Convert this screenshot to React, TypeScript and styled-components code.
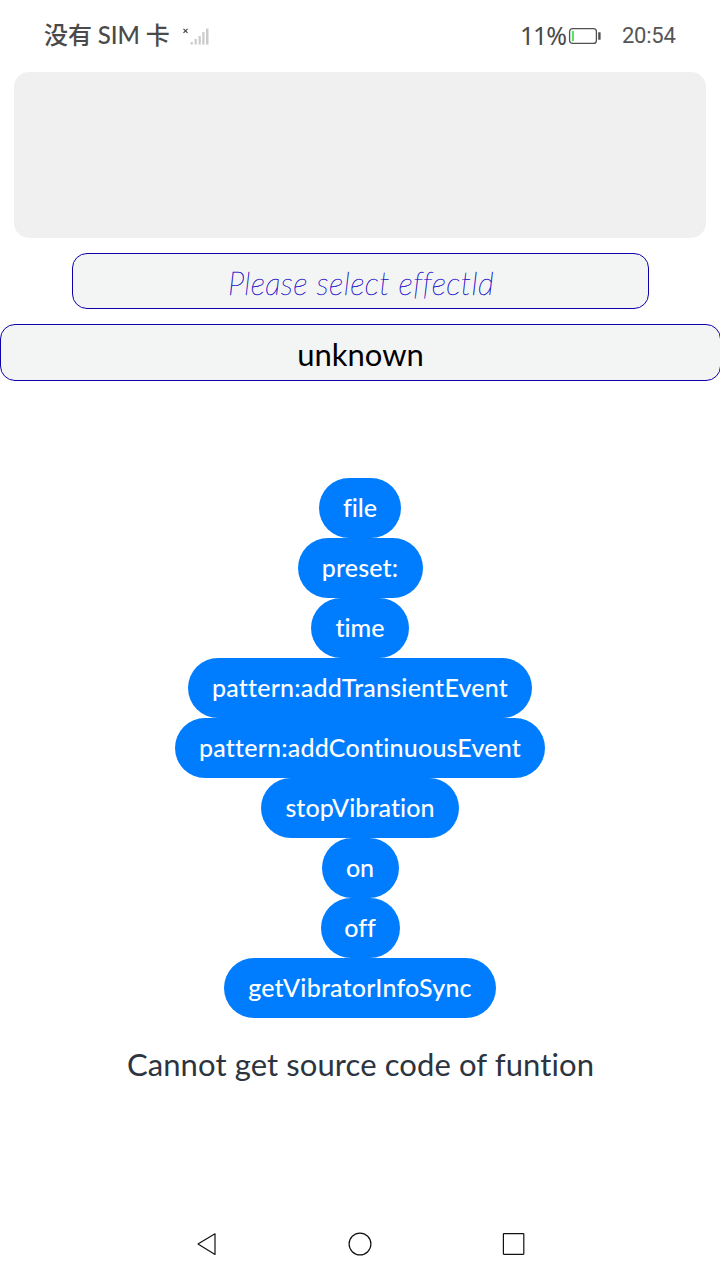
import React from "react";
import styled, { createGlobalStyle } from "styled-components";

const GlobalStyle = createGlobalStyle`
  * { box-sizing: border-box; }
  body { margin: 0; background: #fff; }
`;

const Screen = styled.div`
  display: flex;
  flex-direction: column;
  align-items: center;
  width: 720px;
  height: 1280px;
  overflow: hidden;
  background: #fff;
  font-family: Lato, "Noto Sans CJK SC", sans-serif;
  font-variant-ligatures: none;
`;

const StatusBar = styled.header`
  display: flex;
  align-items: center;
  justify-content: space-between;
  width: 100%;
  height: 72px;
  padding: 0 44px;
  color: #4a4a4a;
`;

const StatusGroup = styled.div`
  display: flex;
  align-items: center;
`;

const Carrier = styled.span`
  width: 138px;
  padding-bottom: 2px;
  font-size: 24px;
  font-weight: 500;
  line-height: 30px;
  letter-spacing: -0.1px;
  white-space: nowrap;
`;

const Battery = styled.span`
  margin-right: 2px;
  padding-bottom: 2px;
  font: 400 25px/30px "Noto Sans", sans-serif;
  letter-spacing: -1.1px;
`;

const Clock = styled.span`
  width: 54px;
  margin-left: 20px;
  font: 400 22px/30px Roboto, sans-serif;
  letter-spacing: -0.25px;
  color: #555;
`;

const OutputPanel = styled.section`
  flex: none;
  width: 692px;
  height: 166px;
  border-radius: 15px;
  background: #f0f0f0;
`;

const Field = styled.div<{ $width: number; $height: number }>`
  display: flex;
  flex: none;
  align-items: center;
  justify-content: center;
  width: ${(p) => p.$width}px;
  height: ${(p) => p.$height}px;
  margin-top: 15px;
  padding: 3px 0 0 1px;
  border: 1px solid #0e00a6;
  border-radius: 15px;
  background: #f3f5f5;
`;

const Placeholder = styled.span`
  padding-left: 1px;
  font-size: 31px;
  font-style: italic;
  font-weight: 100;
  letter-spacing: 0.4px;
  color: #1a10c8;
  -webkit-text-stroke: 0.4px #1a10c8;
`;

const Value = styled.span`
  font-size: 31px;
  color: #000;
`;

const Actions = styled.main`
  display: flex;
  flex-direction: column;
  align-items: center;
  margin-top: 97px;
`;

const ActionButton = styled.button<{ $width: number; $tracking: number }>`
  width: ${(p) => p.$width}px;
  height: 60px;
  padding: 0 0 2px;
  border: 0;
  border-radius: 30px;
  background: #007dff;
  color: #fff;
  font: 500 25px/30px Lato, sans-serif;
  font-variant-ligatures: none;
  letter-spacing: ${(p) => p.$tracking}px;
  white-space: nowrap;
`;

const Message = styled.p`
  margin: 28px 0 0 1px;
  color: #2c3440;
  font-size: 31px;
  line-height: 36px;
  letter-spacing: 0.1px;
  white-space: nowrap;
`;

const NavBar = styled.nav`
  display: flex;
  align-items: center;
  justify-content: space-between;
  width: 332px;
  height: 72px;
  margin-top: auto;
`;

const actions = [
  { label: "file", width: 82, tracking: 0 },
  { label: "preset:", width: 125, tracking: 0.15 },
  { label: "time", width: 98, tracking: 0 },
  { label: "pattern:addTransientEvent", width: 344, tracking: 0.22 },
  { label: "pattern:addContinuousEvent", width: 370, tracking: 0.22 },
  { label: "stopVibration", width: 198, tracking: 0.08 },
  { label: "on", width: 77, tracking: 0 },
  { label: "off", width: 79, tracking: 0 },
  { label: "getVibratorInfoSync", width: 272, tracking: 0.2 },
];

const SignalIcon = () => (
  <svg width="28" height="20" viewBox="0 0 28 20">
    <path d="M1.5 2.9l4 4M5.5 2.9l-4 4" stroke="#4a4a4a" strokeWidth="1.3" />
    <g fill="#cbcbcb">
      <rect x="8.6" y="16" width="2.2" height="2.6" />
      <rect x="12.6" y="13" width="2.2" height="5.6" />
      <rect x="16.6" y="10" width="2.2" height="8.6" />
      <rect x="20.3" y="6" width="2.2" height="12.6" />
      <rect x="24" y="2.6" width="2.5" height="16" />
    </g>
  </svg>
);

const BatteryIcon = () => (
  <svg width="34" height="18" viewBox="0 0 34 18">
    <rect x="1.6" y="1.6" width="26.8" height="14.8" rx="3" fill="none" stroke="#505050" strokeWidth="1.3" />
    <rect x="3.8" y="3.8" width="2.2" height="10.4" rx="0.6" fill="#5be464" />
    <rect x="30.2" y="5.2" width="2.4" height="7.6" rx="0.5" fill="#505050" />
  </svg>
);

export default function App() {
  return (
    <Screen>
      <GlobalStyle />
      <StatusBar>
        <StatusGroup>
          <Carrier>没有 SIM 卡</Carrier>
          <SignalIcon />
        </StatusGroup>
        <StatusGroup>
          <Battery>11%</Battery>
          <BatteryIcon />
          <Clock>20:54</Clock>
        </StatusGroup>
      </StatusBar>
      <OutputPanel />
      <Field $width={577} $height={56}>
        <Placeholder>Please select effectId</Placeholder>
      </Field>
      <Field $width={721} $height={57}>
        <Value>unknown</Value>
      </Field>
      <Actions>
        {actions.map((a) => (
          <ActionButton key={a.label} $width={a.width} $tracking={a.tracking}>
            {a.label}
          </ActionButton>
        ))}
      </Actions>
      <Message>Cannot get source code of funtion</Message>
      <NavBar>
        <svg width="26" height="26" viewBox="0 0 26 26" fill="none" stroke="#111" strokeWidth="1.2">
          <path d="M4 13L21 2.8v20.6z" strokeLinejoin="round" />
        </svg>
        <svg width="26" height="26" viewBox="0 0 26 26" fill="none" stroke="#111" strokeWidth="1.2">
          <circle cx="13" cy="13" r="10.9" />
        </svg>
        <svg width="26" height="26" viewBox="0 0 26 26" fill="none" stroke="#111" strokeWidth="1.2">
          <rect x="3.4" y="2.7" width="20.4" height="20.6" rx="0.5" />
        </svg>
      </NavBar>
    </Screen>
  );
}
